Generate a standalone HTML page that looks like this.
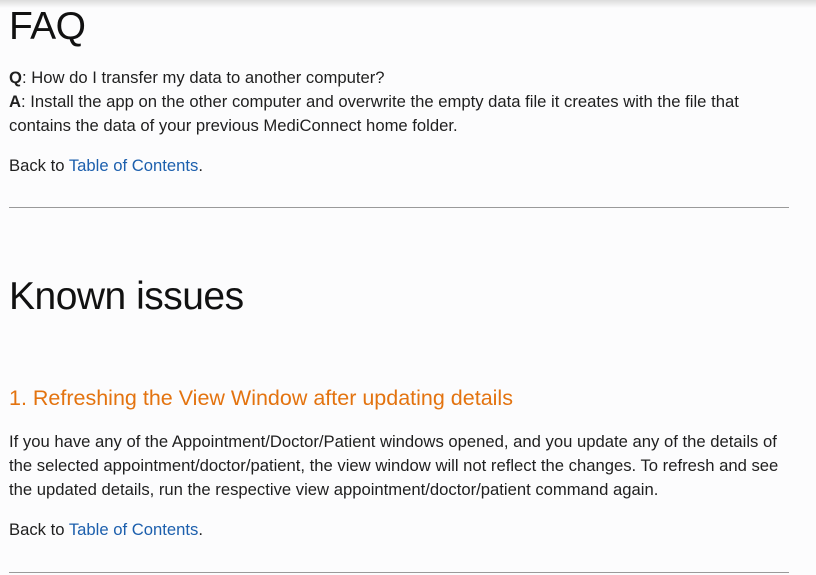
<!DOCTYPE html>
<html><head><meta charset="utf-8"><style>
html,body{margin:0;padding:0;width:816px;height:575px;overflow:hidden;background:#fcfcfd;font-family:"Liberation Sans",sans-serif;color:#1f1f1f}
.shadow{position:absolute;left:0;top:0;width:816px;height:8px;background:linear-gradient(#dcdcdc,rgba(252,252,253,0))}
.a{position:absolute;left:9px;white-space:nowrap}
.t{font-size:16.65px;line-height:24px}
h1{margin:0;font-weight:400;font-size:39px;line-height:50px;letter-spacing:-0.5px;color:#111}
a{color:#1c5fad;text-decoration:none}
.o{color:#e3730f;font-size:21.5px;line-height:28px}
.hr{position:absolute;left:9px;width:780px;height:0;border-top:1px solid #9a9a9a}
</style></head><body>
<div class="shadow"></div>
<h1 class="a" style="top:2px">FAQ</h1>
<div class="a t" style="top:66px"><b>Q</b>: How do I transfer my data to another computer?<br><b>A</b>: Install the app on the other computer and overwrite the empty data file it creates with the file that<br>contains the data of your previous MediConnect home folder.</div>
<div class="a t" style="top:154px">Back to <a>Table of Contents</a>.</div>
<div class="hr" style="top:207px"></div>
<h1 class="a" style="top:272px">Known issues</h1>
<div class="a o" style="top:384px">1. Refreshing the View Window after updating details</div>
<div class="a t" style="top:430px">If you have any of the Appointment/Doctor/Patient windows opened, and you update any of the details of<br>the selected appointment/doctor/patient, the view window will not reflect the changes. To refresh and see<br>the updated details, run the respective view appointment/doctor/patient command again.</div>
<div class="a t" style="top:518px">Back to <a>Table of Contents</a>.</div>
<div class="hr" style="top:572px"></div>
</body></html>
